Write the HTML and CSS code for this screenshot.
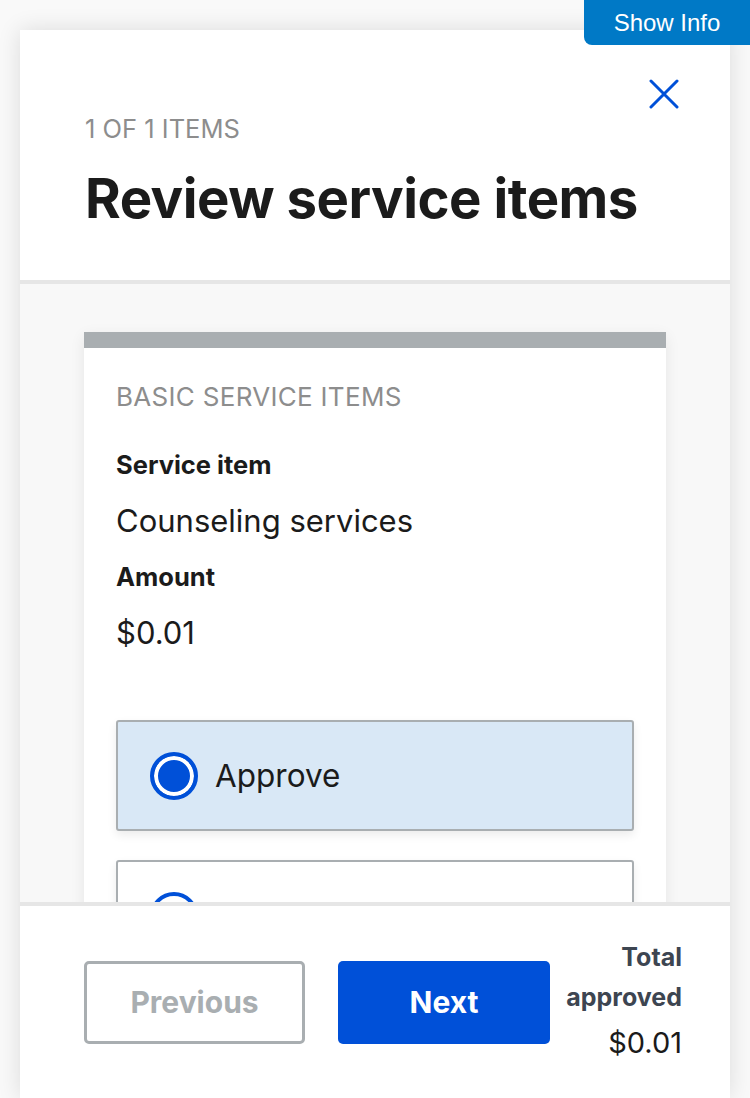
FILE: index.html
```html
<!DOCTYPE html>
<html lang="en">
<head>
<meta charset="utf-8">
<title>Review service items</title>
<link rel="stylesheet" href="styles.css">
</head>
<body>
<button class="show-info">Show Info</button>
<div class="panel">
  <header class="panel-head">
    <div class="close-row">
      <button class="close" aria-label="Close">
        <svg viewBox="0 0 30 30" width="30" height="30"><path d="M2 2 L28 28 M28 2 L2 28" stroke="#0050d8" stroke-width="3" stroke-linecap="round" fill="none"/></svg>
      </button>
    </div>
    <div class="counter">1 OF 1 ITEMS</div>
    <h1 class="title">Review service items</h1>
  </header>
  <main class="panel-body">
    <section class="card">
      <div class="card-kicker">BASIC SERVICE ITEMS</div>
      <div class="field-label first">Service item</div>
      <div class="field-value">Counseling services</div>
      <div class="field-label">Amount</div>
      <div class="field-value">$0.01</div>
      <label class="option selected">
        <span class="radio checked"></span>
        <span class="option-text">Approve</span>
      </label>
      <label class="option">
        <span class="radio"></span>
        <span class="option-text">Deny</span>
      </label>
    </section>
  </main>
  <footer class="panel-foot">
    <button class="btn btn-outline" disabled>Previous</button>
    <button class="btn btn-primary">Next</button>
    <div class="total">
      <div class="total-label">Total approved</div>
      <div class="total-value">$0.01</div>
    </div>
  </footer>
</div>
</body>
</html>
```

FILE: styles.css
```css
html, body {
  margin: 0;
  padding: 0;
  height: 1098px;
  overflow: hidden;
  background: #f9f9f9;
  font-family: "Inter", "Noto Sans", sans-serif;
  color: #1b1b1b;
}

.show-info {
  position: absolute;
  top: 0;
  right: 0;
  width: 166px;
  height: 45px;
  border: 0;
  border-radius: 0 0 0 8px;
  background: #0079c6;
  color: #fff;
  font-family: "Liberation Sans", Arial, sans-serif;
  font-size: 24px;
  z-index: 5;
}

.panel {
  margin: 30px 20px 0 20px;
  height: 1068px;
  background: #fff;
  box-shadow: 0 0 22px rgba(0, 0, 0, 0.12);
  display: flex;
  flex-direction: column;
  overflow: hidden;
}

.panel-head {
  padding: 48px 50px 0 65px;
  height: 202px;
  border-bottom: 4px solid #e6e6e6;
  flex: none;
}

.close-row {
  display: flex;
  justify-content: flex-end;
  height: 32px;
}

.close {
  border: 0;
  background: none;
  padding: 0;
  width: 32px;
  height: 32px;
  display: flex;
  align-items: center;
  justify-content: center;
}

.counter {
  margin-top: 4px;
  font-size: 25.5px;
  line-height: 30px;
  color: #8d8d8d;
}

.title {
  margin: 24px 0 0;
  font-size: 54.5px;
  line-height: 60px;
  font-weight: 700;
  letter-spacing: -0.5px;
}

.panel-body {
  flex: 1;
  background: #f8f8f8;
  padding: 48px 64px 0 64px;
  overflow: hidden;
}

.card {
  background: #fff;
  border-top: 16px solid #a9aeb1;
  padding: 34px 32px 40px;
  box-shadow: 0 4px 14px rgba(0, 0, 0, 0.08);
}

.card-kicker {
  font-size: 26px;
  line-height: 30px;
  color: #8d8d8d;
  letter-spacing: 0.3px;
}

.field-label {
  margin-top: 22px;
  font-size: 25.5px;
  line-height: 30px;
  font-weight: 700;
}

.field-label.first {
  margin-top: 38px;
}

.field-value {
  margin-top: 22px;
  font-size: 31px;
  line-height: 38px;
}

.option {
  display: flex;
  align-items: center;
  gap: 17px;
  height: 107px;
  margin-top: 68px;
  padding: 0 32px;
  border: 2px solid #a9aeb1;
  border-radius: 3px;
  background: #fff;
  box-shadow: 0 4px 10px rgba(0, 0, 0, 0.08);
}

.option + .option {
  margin-top: 29px;
}

.option.selected {
  background: #d9e8f6;
}

.radio {
  width: 40px;
  height: 40px;
  border-radius: 50%;
  border: 4px solid #0050d8;
  background: #fff;
  flex: none;
}

.radio.checked {
  background: #0050d8;
  box-shadow: inset 0 0 0 4px #fff;
}

.option-text {
  font-size: 31.5px;
  line-height: 38px;
}

.panel-foot {
  flex: none;
  height: 192px;
  border-top: 4px solid #e6e6e6;
  background: #fff;
  display: flex;
  align-items: center;
  padding: 0 48px 0 64px;
  gap: 33px;
}

.btn {
  height: 83px;
  border-radius: 5px;
  font-family: inherit;
  font-size: 30px;
  font-weight: 700;
  flex: none;
}

.btn-outline {
  width: 221px;
  background: #fff;
  border: 3px solid #a9aeb1;
  color: #a9aeb1;
}

.btn-primary {
  width: 212px;
  background: #0050d8;
  border: 0;
  color: #fff;
}

.total {
  flex: 1;
  margin-left: -17px;
  padding-bottom: 6px;
  text-align: right;
}

.total-label {
  font-size: 25px;
  line-height: 40px;
  font-weight: 700;
  color: #3d4551;
}

.total-value {
  margin-top: 8px;
  font-size: 29px;
  line-height: 36px;
  color: #1b1b1b;
}
```
